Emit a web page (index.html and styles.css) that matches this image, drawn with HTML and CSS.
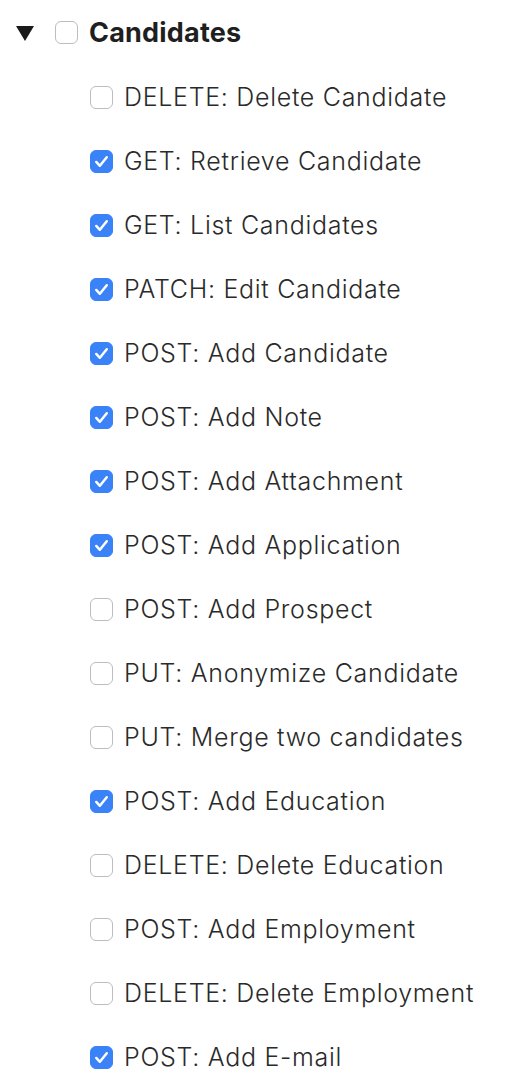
FILE: index.html
```html
<!DOCTYPE html>
<html lang="en">
<head>
  <meta charset="UTF-8">
  <title>Permissions</title>
  <link rel="stylesheet" href="styles.css">
</head>
<body>
  <details class="perm-group" open>
    <summary>
      <svg class="caret" width="18" height="15" viewBox="0 0 18 15"><polygon points="0,0 18,0 9,15" fill="#1a1a1a"/></svg>
      <input type="checkbox" class="box">
      <span class="group-name">Candidates</span>
    </summary>

    <ul class="perm-list">
      <li><label><input type="checkbox" class="box"> DELETE: Delete Candidate</label></li>
      <li><label><input type="checkbox" class="box" checked> GET: Retrieve Candidate</label></li>
      <li><label><input type="checkbox" class="box" checked> GET: List Candidates</label></li>
      <li><label><input type="checkbox" class="box" checked> PATCH: Edit Candidate</label></li>
      <li><label><input type="checkbox" class="box" checked> POST: Add Candidate</label></li>
      <li><label><input type="checkbox" class="box" checked> POST: Add Note</label></li>
      <li><label><input type="checkbox" class="box" checked> POST: Add Attachment</label></li>
      <li><label><input type="checkbox" class="box" checked> POST: Add Application</label></li>
      <li><label><input type="checkbox" class="box"> POST: Add Prospect</label></li>
      <li><label><input type="checkbox" class="box"> PUT: Anonymize Candidate</label></li>
      <li><label><input type="checkbox" class="box"> PUT: Merge two candidates</label></li>
      <li><label><input type="checkbox" class="box" checked> POST: Add Education</label></li>
      <li><label><input type="checkbox" class="box"> DELETE: Delete Education</label></li>
      <li><label><input type="checkbox" class="box"> POST: Add Employment</label></li>
      <li><label><input type="checkbox" class="box"> DELETE: Delete Employment</label></li>
      <li><label><input type="checkbox" class="box" checked> POST: Add E-mail</label></li>
    </ul>
  </details>
</body>
</html>
```

FILE: styles.css
```css
body {
  font-family: Inter, "Noto Sans", sans-serif;
  background-color: #fff;
  color: #222;
  margin: 0;
  padding: 0;
}

.perm-group summary {
  list-style: none;
  display: flex;
  align-items: center;
  height: 64px;
  padding-left: 16px;
  cursor: pointer;
}

.perm-group summary::-webkit-details-marker {
  display: none;
}

.caret {
  margin-right: 21px;
  margin-top: 2px;
}

.group-name {
  font-size: 27px;
  font-weight: 700;
  letter-spacing: 0.2px;
  color: #1f1f1f;
  margin-left: 11px;
}

/* custom checkbox, mac-ish */
.box {
  appearance: none;
  -webkit-appearance: none;
  width: 23px;
  height: 23px;
  margin: 0;
  border: 1.5px solid #bdbdbd;
  border-radius: 6px;
  background: #fff;
  flex-shrink: 0;
}

.box:checked {
  border-color: #3a82f7;
  background: #3a82f7 url("data:image/svg+xml,%3Csvg xmlns='http://www.w3.org/2000/svg' viewBox='0 0 22 22'%3E%3Cpath d='M5.5 11.5l3.8 4 7.2-9' fill='none' stroke='white' stroke-width='2.6' stroke-linecap='round' stroke-linejoin='round'/%3E%3C/svg%3E") center / 100% no-repeat;
}

.perm-list {
  list-style: none;
  margin: 0;
  padding: 1px 0 0 90px;
}

.perm-list li {
  height: 64px;
  display: flex;
  align-items: center;
}

.perm-list label {
  display: flex;
  align-items: center;
  gap: 11px;
  font-size: 25px;
  font-weight: 330;
  letter-spacing: 0.7px;
  color: #2a2a2a;
}
```
